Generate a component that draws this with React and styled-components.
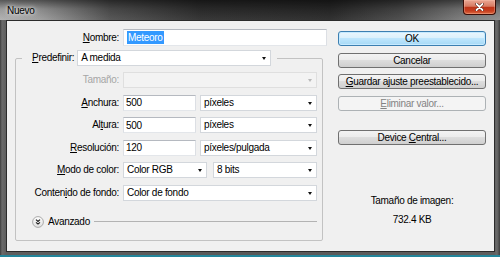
import React from 'react';
import styled, { createGlobalStyle, css } from 'styled-components';

const GlobalStyle = createGlobalStyle`
  html, body { margin: 0; padding: 0; background: #23859a; }
  body { font-family: "Liberation Sans", Arial, sans-serif; }
`;

const Window = styled.div`
  width: 500px;
  height: 257px;
  box-sizing: border-box;
  display: flex;
  flex-direction: column;
  overflow: hidden;
  background: linear-gradient(90deg, #3c3c3c 0, #6a6a6a 2px, #5e5e5e 6px, #585858 50%, #5e5e5e 494px, #6a6a6a 497px, #3c3c3c 500px);
  border-bottom: 2px solid #23859a;
  font-family: "Liberation Sans", Arial, sans-serif;
  font-size: 10px;
  letter-spacing: -0.3px;
  color: #000;
`;

const TitleBar = styled.div`
  flex: none;
  height: 20px;
  display: flex;
  align-items: flex-start;
  background:
    linear-gradient(180deg, rgba(0, 0, 0, 0.5) 0, rgba(0, 0, 0, 0.12) 45%, rgba(255, 255, 255, 0.05) 100%),
    linear-gradient(90deg, #b0b0b0 0, #9c9c9c 40px, #505050 110px, #2e2e2e 200px, #282828 330px, #484848 400px, #7c7c7c 465px, #8c8c8c 500px);
`;

const Title = styled.span`
  margin: 5px 0 0 7px;
  line-height: 12px;
  color: #000;
  text-shadow: 0 0 6px rgba(255, 255, 255, 0.95), 0 0 3px rgba(255, 255, 255, 0.8);
`;

const CloseButton = styled.div`
  margin: 0 4px 0 auto;
  width: 33px;
  height: 15px;
  box-sizing: border-box;
  border: 1px solid #3b0d06;
  border-top: none;
  border-radius: 0 0 4px 4px;
  display: flex;
  align-items: center;
  justify-content: center;
  background: linear-gradient(180deg, #eaa895 0, #d77a62 45%, #bd3418 52%, #c63e1f 78%, #de6c42 100%);
  box-shadow: inset 0 0 0 1px rgba(255, 200, 180, 0.35);
`;

const FrameBody = styled.div`
  flex: 1;
  display: flex;
  padding: 0 5px 3px 6px;
  min-height: 0;
`;

const Client = styled.div`
  flex: 1;
  display: flex;
  border: 1px solid #2b2b2b;
  background: #f0f0f0;
`;

const LeftCol = styled.div`
  flex: none;
  width: 320px;
  display: flex;
  flex-direction: column;
  padding-top: 8px;
`;

const NameRow = styled.div`
  display: grid;
  grid-template-columns: 112px 204px;
  column-gap: 4px;
  align-items: center;
  height: 17px;
`;

const Label = styled.span`
  text-align: right;
  white-space: nowrap;
  line-height: 12px;
  color: ${p => (p.$disabled ? '#a6a6a6' : '#000')};
`;

const fieldBorder = css`
  border: 1px solid;
  border-color: #b5b9c0 #dcdfe4 #e3e6ea #dcdfe4;
`;

const TextInput = styled.div`
  ${fieldBorder};
  box-sizing: border-box;
  height: ${p => p.$height || 16}px;
  width: ${p => (p.$width ? `${p.$width}px` : 'auto')};
  flex: none;
  background: #fff;
  display: flex;
  align-items: center;
  padding: 0 2px;
  line-height: 13px;
  white-space: nowrap;
`;

const Selection = styled.span`
  background: #3399ff;
  color: #fff;
  padding: 0 1px;
  margin-left: 1px;
  line-height: 13px;
`;

const GroupBox = styled.fieldset`
  margin: 4px 0 0 8px;
  padding: 6px 5px 13px 0;
  width: 308px;
  min-width: 0;
  box-sizing: border-box;
  border: 1px solid #c2c2c2;
  border-radius: 2px;
`;

const Legend = styled.legend`
  margin-left: 6px;
  padding: 0 6px 0 10px;
`;

const LegendInner = styled.span`
  display: flex;
  align-items: center;
  gap: 3px;
`;

const FormGrid = styled.div`
  display: grid;
  grid-template-columns: 103px 194px;
  grid-auto-rows: 16px;
  column-gap: 4px;
  row-gap: 6.5px;
  align-items: center;
`;

const Field = styled.div`
  display: flex;
  gap: ${p => p.$gap || 4}px;
  height: 16px;
`;

const Dropdown = styled.div`
  position: relative;
  box-sizing: border-box;
  height: 16px;
  flex: ${p => (p.$width ? `0 0 ${p.$width}px` : '1 1 auto')};
  border: 1px solid ${p => (p.$disabled ? '#dfdfdf' : '#d3d7dc')};
  background: ${p => (p.$disabled ? '#f3f3f3' : '#fff')};
  padding: 0 12px 0 3px;
  line-height: 14px;
  white-space: nowrap;
  overflow: hidden;

  &::after {
    content: '';
    position: absolute;
    right: 4px;
    top: 6px;
    border-left: 2.5px solid transparent;
    border-right: 2.5px solid transparent;
    border-top: 3px solid ${p => (p.$disabled ? '#b8b8b8' : '#111')};
  }
`;

const AdvancedRow = styled.div`
  display: flex;
  align-items: center;
  height: 11px;
  margin-top: 15.5px;
  padding-left: 16px;
`;

const AdvancedText = styled.span`
  margin-left: 4px;
  line-height: 12px;
`;

const Rule = styled.div`
  flex: 1;
  height: 1px;
  margin-left: 4px;
  background: #b3b3b3;
`;

const RightCol = styled.div`
  flex: none;
  width: 148px;
  margin-left: 11px;
  padding-top: 10px;
  display: flex;
  flex-direction: column;
  gap: 6.5px;
`;

const Button = styled.div`
  box-sizing: border-box;
  height: 15px;
  border: 1px solid #707070;
  border-radius: 3px;
  text-align: center;
  line-height: 13px;
  white-space: nowrap;
  background: linear-gradient(180deg, #f3f3f3 0, #ebebeb 50%, #dddddd 50%, #cfcfcf 100%);
  color: #000;
  margin-top: ${p => p.$offset || 0}px;

  ${p =>
    p.$default &&
    css`
      border-color: #3c7fb1;
      background: linear-gradient(180deg, #eaf6fd 0, #d9f0fc 50%, #bee6fd 50%, #a7d9f5 100%);
      box-shadow: inset 0 0 0 1px #c6eaff;
    `}

  ${p =>
    p.$disabled &&
    css`
      border-color: #adb2b5;
      background: #f4f4f4;
      color: #838383;
    `}
`;

const Info = styled.div`
  margin-top: 43px;
  display: flex;
  flex-direction: column;
  align-items: center;
  gap: 7px;
  line-height: 12px;
`;

const CloseIcon = () => (
  <svg width="9" height="8" viewBox="0 0 9 8">
    <path d="M1.5 1 L7.5 7 M7.5 1 L1.5 7" stroke="#4a140a" strokeWidth="3" strokeLinecap="round" />
    <path d="M1.5 1 L7.5 7 M7.5 1 L1.5 7" stroke="#fff" strokeWidth="1.8" strokeLinecap="round" />
  </svg>
);

const AdvancedIcon = () => (
  <svg width="12" height="12" viewBox="0 0 12 12">
    <defs>
      <linearGradient id="advg" x1="0" y1="0" x2="0" y2="1">
        <stop offset="0" stopColor="#ffffff" />
        <stop offset="1" stopColor="#dedede" />
      </linearGradient>
    </defs>
    <circle cx="6" cy="6" r="5.4" fill="url(#advg)" stroke="#a2a2a2" strokeWidth="0.9" />
    <path d="M4 3.6 L6 5.4 L8 3.6 M4 6.3 L6 8.1 L8 6.3" fill="none" stroke="#1a1a1a" strokeWidth="1.1" />
  </svg>
);

export default function App() {
  return (
    <>
      <GlobalStyle />
      <Window>
        <TitleBar>
          <Title>Nuevo</Title>
          <CloseButton>
            <CloseIcon />
          </CloseButton>
        </TitleBar>
        <FrameBody>
          <Client>
            <LeftCol>
              <NameRow>
                <Label>
                  <u>N</u>ombre:
                </Label>
                <TextInput $height={17}>
                  <Selection>Meteoro</Selection>
                </TextInput>
              </NameRow>
              <GroupBox>
                <Legend>
                  <LegendInner>
                    <Label>
                      <u>P</u>redefinir:
                    </Label>
                    <Dropdown $width={194}>A medida</Dropdown>
                  </LegendInner>
                </Legend>
                <FormGrid>
                  <Label $disabled>Tamaño:</Label>
                  <Field>
                    <Dropdown $disabled />
                  </Field>

                  <Label>
                    <u>A</u>nchura:
                  </Label>
                  <Field>
                    <TextInput $width={73}>500</TextInput>
                    <Dropdown>píxeles</Dropdown>
                  </Field>

                  <Label>
                    Al<u>t</u>ura:
                  </Label>
                  <Field>
                    <TextInput $width={73}>500</TextInput>
                    <Dropdown>píxeles</Dropdown>
                  </Field>

                  <Label>
                    <u>R</u>esolución:
                  </Label>
                  <Field>
                    <TextInput $width={73}>120</TextInput>
                    <Dropdown>píxeles/pulgada</Dropdown>
                  </Field>

                  <Label>
                    <u>M</u>odo de color:
                  </Label>
                  <Field $gap={6}>
                    <Dropdown $width={84}>Color RGB</Dropdown>
                    <Dropdown>8 bits</Dropdown>
                  </Field>

                  <Label>
                    Conten<u>i</u>do de fondo:
                  </Label>
                  <Field>
                    <Dropdown>Color de fondo</Dropdown>
                  </Field>
                </FormGrid>
                <AdvancedRow>
                  <AdvancedIcon />
                  <AdvancedText>Avanzado</AdvancedText>
                  <Rule />
                </AdvancedRow>
              </GroupBox>
            </LeftCol>
            <RightCol>
              <Button $default>OK</Button>
              <Button>Cancelar</Button>
              <Button>
                <u>G</u>uardar ajuste preestablecido...
              </Button>
              <Button $disabled>
                <u>E</u>liminar valor...
              </Button>
              <Button $offset={13}>
                Device <u>C</u>entral...
              </Button>
              <Info>
                <span>Tamaño de imagen:</span>
                <span>732.4 KB</span>
              </Info>
            </RightCol>
          </Client>
        </FrameBody>
      </Window>
    </>
  );
}
